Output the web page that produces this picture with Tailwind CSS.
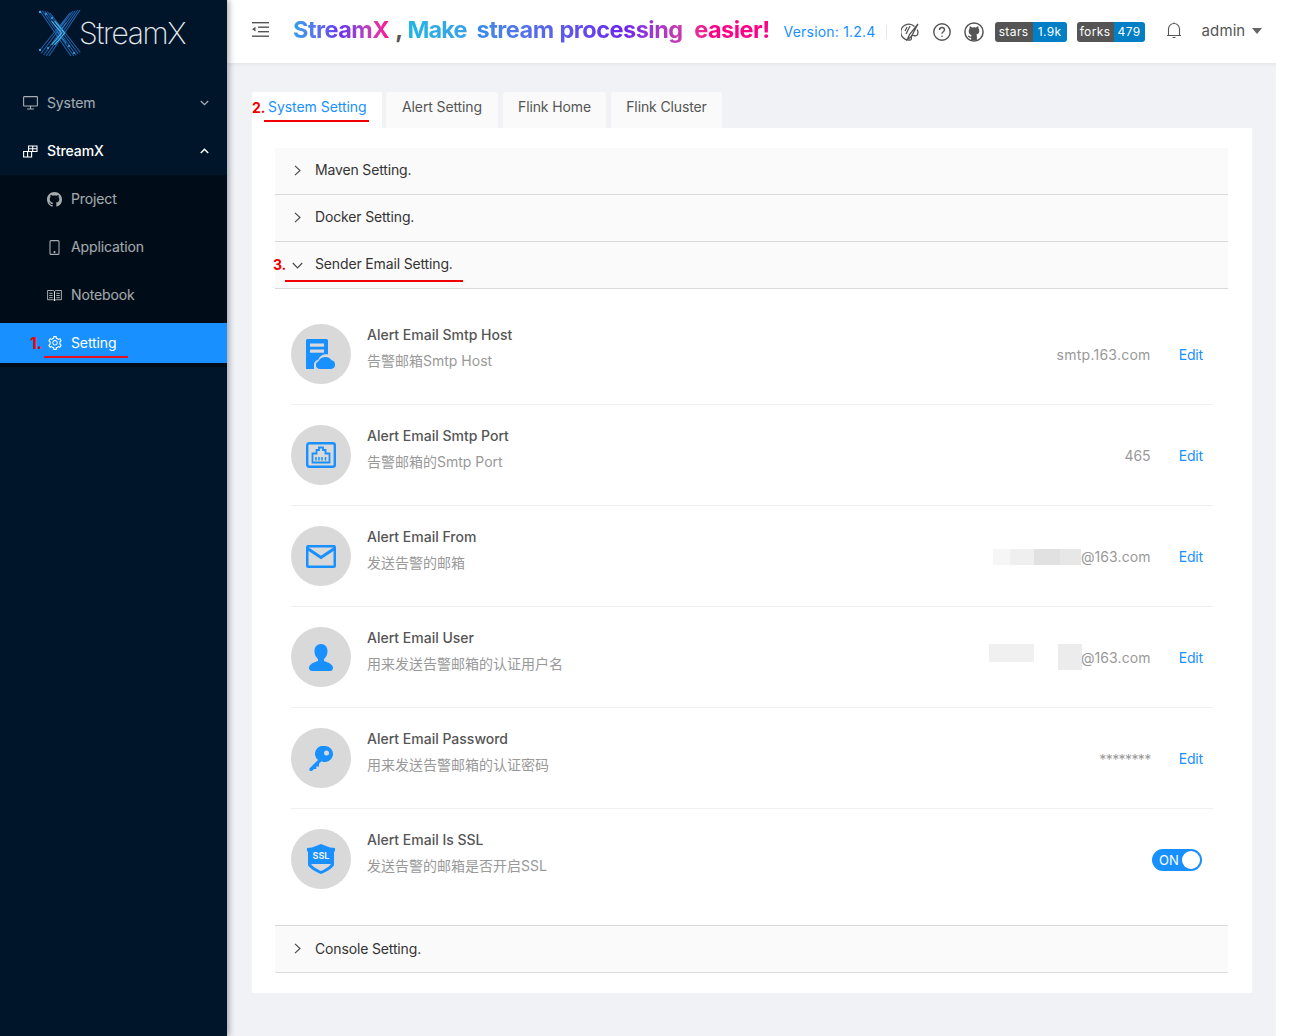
<!DOCTYPE html>
<html lang="en">
<head>
<meta charset="utf-8">
<script src="https://cdn.jsdelivr.net/npm/@tailwindcss/browser@4"></script>
<title>StreamX</title>
</head>
<body class="bg-white font-['Inter','Noto_Sans_CJK_SC',sans-serif] text-sm">
<div class="flex w-[1276px] h-[1036px] overflow-hidden bg-[#f0f2f5]">
  <!-- sidebar -->
  <aside class="relative z-10 w-[227px] shrink-0 bg-[#001529] shadow-[2px_0_6px_rgba(0,21,41,0.35)] text-[14px] tracking-[-0.12px]">
    <div class="h-[79px] flex items-start pt-[10px] pl-[39px]">
      <svg class="w-[42px] h-[46px] shrink-0" viewBox="0 0 42 46" fill="none" stroke-linecap="round">
        <g stroke="#1d62ad" stroke-width="1.100">
          <path d="M1 1L32 46M3.500 1L34.500 45.500M6 1.500L37 45M8.500 2L39 43.500M11 3L41 42M13.500 6L24 21"/>
          <path d="M41 0L10 46M38.500 .5L7.500 45.500M36 1L5 44.500M33.500 1.500L2.500 43M31 3L1 40M28.500 6L17 23"/>
        </g>
        <path d="M13 11.500L22.500 23 13 34.500M16 11.500L25.500 23 16 34.500" stroke="#56c2ee" stroke-width="1.100"/>
        <path d="M27 13L19.500 23 27 33" stroke="#2f86cf" stroke-width="1"/>
        <g fill="#3fa9e8"><circle cx="1" cy="2" r="1.200"/><circle cx="7" cy="4" r="1"/><circle cx="13" cy="8" r="1"/><circle cx="1" cy="40" r="1.200"/><circle cx="9" cy="38" r="1"/><circle cx="35" cy="43" r="1"/><circle cx="30" cy="36" r="1"/></g>
      </svg>
      <span class="ml-[-2px] mt-[5px] font-extralight text-[30px] leading-[36px] tracking-[-1.350px] text-[#e4e9ee]">StreamX</span>
    </div>

    <div class="mt-[4px] h-[40px] flex items-center pl-[23px] pr-[18px] text-white/65">
      <svg class="w-[15px] h-[14px] mr-[9px]" viewBox="0 0 15 14" fill="none" stroke="currentColor" stroke-width="1.100"><rect x=".6" y=".6" width="13.800" height="9.400" rx=".6"/><path d="M7.500 10v3M4 13h7"/></svg>
      <span class="flex-1">System</span>
      <svg class="w-[9px] h-[6px]" viewBox="0 0 9 6" fill="none" stroke="currentColor" stroke-width="1.300"><path d="M.8 1l3.700 3.700L8.200 1"/></svg>
    </div>
    <div class="mt-[8px] h-[40px] flex items-center pl-[23px] pr-[18px] text-white font-medium">
      <svg class="w-[15px] h-[13px] mr-[9px]" viewBox="0 0 15 13" fill="none" stroke="currentColor" stroke-width="1.100"><path d="M5.500 1h8.500v5.500H5.500zM9.700 1v5.500M5.500 3.800h8.500M.6 6.500h8v5.500h-8zM4.600 6.500v5.500"/></svg>
      <span class="flex-1">StreamX</span>
      <svg class="w-[9px] h-[6px]" viewBox="0 0 9 6" fill="none" stroke="currentColor" stroke-width="1.500"><path d="M.8 5l3.700-3.700L8.200 5"/></svg>
    </div>

    <div class="mt-[4px] bg-[#000c17] pt-[4px] pb-[4px] text-white/65">
      <div class="h-[40px] flex items-center pl-[47px]">
        <svg class="w-[15px] h-[15px] mr-[9px]" viewBox="0 0 16 16" fill="currentColor"><path d="M8 0C3.580 0 0 3.580 0 8c0 3.540 2.290 6.530 5.470 7.590.4.070.55-.17.55-.38 0-.19-.01-.82-.01-1.490-2.010.370-2.530-.49-2.690-.94-.09-.23-.48-.94-.82-1.130-.28-.15-.68-.52-.01-.53.630-.01 1.080.580 1.230.820.720 1.210 1.870.870 2.330.660.070-.52.280-.87.510-1.070-1.780-.2-3.640-.89-3.640-3.950 0-.87.310-1.590.820-2.150-.08-.2-.36-1.020.080-2.120 0 0 .670-.21 2.200.820.640-.18 1.320-.27 2-.27s1.360.090 2 .27c1.530-1.040 2.200-.82 2.200-.82.440 1.100.160 1.920.080 2.120.510.560.820 1.270.820 2.150 0 3.070-1.870 3.750-3.650 3.950.290.250.540.730.540 1.480 0 1.070-.01 1.930-.01 2.200 0 .21.150.46.550.38A8.013 8.013 0 0016 8c0-4.420-3.580-8-8-8z"/></svg>
        <span>Project</span>
      </div>
      <div class="mt-[8px] h-[40px] flex items-center pl-[47px]">
        <svg class="w-[15px] h-[15px] mr-[9px]" viewBox="0 0 15 15" fill="none" stroke="currentColor" stroke-width="1.100"><rect x="3" y=".6" width="9" height="13.800" rx="1"/><circle cx="7.500" cy="12" r=".5" fill="currentColor"/></svg>
        <span>Application</span>
      </div>
      <div class="mt-[8px] h-[40px] flex items-center pl-[47px]">
        <svg class="w-[15px] h-[13px] mr-[9px]" viewBox="0 0 15 13" fill="none" stroke="currentColor" stroke-width="1"><path d="M.6 1.500h5c1 0 1.900.5 1.900 1.500v9c0-.9-.9-1.300-1.900-1.300h-5zM14.400 1.500h-5c-1 0-1.900.5-1.900 1.500v9c0-.9.9-1.300 1.900-1.300h5zM2.200 4.300h3.500M2.200 6.500h3.500M2.200 8.700h3.500M9.300 4.300h3.500M9.300 6.500h3.500M9.300 8.700h3.500"/></svg>
        <span>Notebook</span>
      </div>
      <div class="relative mt-[8px] h-[40px] flex items-center pl-[47px] bg-[#1890ff] text-white">
        <span class="absolute left-[30px] top-[10px] text-[16px] leading-[20px] font-bold text-[#f00000]">1.</span>
        <svg class="w-[16px] h-[16px] mr-[8px]" viewBox="0 0 1024 1024" fill="currentColor"><path d="M924.800 625.700l-65.500-56c3.100-19 4.700-38.400 4.700-57.800s-1.600-38.800-4.700-57.800l65.500-56a32.030 32.030 0 0 0 9.300-35.200l-.9-2.600a443.740 443.740 0 0 0-79.700-137.900l-1.800-2.100a32.120 32.120 0 0 0-35.100-9.500l-81.300 28.900c-30-24.600-63.500-44-99.700-57.600l-15.700-85a32.050 32.050 0 0 0-25.800-25.700l-2.700-.5c-52.100-9.400-106.900-9.400-159 0l-2.700.5a32.050 32.050 0 0 0-25.800 25.700l-15.800 85.400a351.860 351.860 0 0 0-99 57.400l-81.900-29.100a32 32 0 0 0-35.100 9.500l-1.800 2.100a446.020 446.020 0 0 0-79.700 137.900l-.9 2.600c-4.500 12.500-.8 26.500 9.300 35.200l66.300 56.600c-3.100 18.800-4.600 38-4.600 57.100 0 19.200 1.500 38.400 4.600 57.100L99 625.500a32.030 32.030 0 0 0-9.300 35.200l.9 2.600c18.100 50.400 44.900 96.900 79.700 137.900l1.800 2.100a32.120 32.120 0 0 0 35.100 9.500l81.900-29.100c29.800 24.500 63.100 43.900 99 57.400l15.800 85.400a32.050 32.050 0 0 0 25.800 25.700l2.700.5a449.400 449.400 0 0 0 159 0l2.700-.5a32.050 32.050 0 0 0 25.800-25.700l15.700-85a350 350 0 0 0 99.700-57.600l81.300 28.900a32 32 0 0 0 35.100-9.500l1.800-2.100c34.800-41.100 61.600-87.500 79.700-137.900l.9-2.600c4.500-12.300.8-26.300-9.300-35zM788.300 465.900c2.500 15.100 3.800 30.600 3.800 46.100s-1.300 31-3.800 46.100l-6.600 40.100 74.700 63.900a370.030 370.030 0 0 1-42.600 73.600L721 702.800l-31.400 25.800c-23.900 19.600-50.500 35-79.300 45.800l-38.100 14.300-17.900 97a377.500 377.500 0 0 1-85 0l-17.900-97.200-37.800-14.500c-28.500-10.800-55-26.200-78.700-45.700l-31.400-25.900-93.400 33.200c-17-22.900-31.200-47.600-42.600-73.600l75.500-64.500-6.500-40c-2.400-14.900-3.700-30.300-3.700-45.500 0-15.300 1.200-30.600 3.700-45.500l6.500-40-75.500-64.500c11.300-26.100 25.600-50.700 42.600-73.600l93.400 33.200 31.400-25.900c23.700-19.500 50.200-34.900 78.700-45.700l37.900-14.300 17.900-97.200c28.100-3.200 56.800-3.200 85 0l17.900 97 38.100 14.300c28.700 10.800 55.400 26.200 79.300 45.800l31.400 25.800 92.800-32.900c17 22.900 31.200 47.600 42.600 73.600L781.800 426l6.500 39.900zM512 326c-97.200 0-176 78.800-176 176s78.800 176 176 176 176-78.800 176-176-78.800-176-176-176zm79.200 255.200A111.600 111.600 0 0 1 512 614c-29.900 0-58-11.700-79.200-32.800A111.600 111.600 0 0 1 400 502c0-29.900 11.700-58 32.800-79.200C454 401.600 482.100 390 512 390c29.900 0 58 11.600 79.200 32.800A111.600 111.600 0 0 1 624 502c0 29.900-11.700 58-32.800 79.200z"/></svg>
        <span>Setting</span>
        <span class="absolute left-[44px] top-[33px] w-[84px] h-[2px] bg-[#e8101c]"></span>
      </div>
    </div>
  </aside>

  <!-- main -->
  <div class="flex-1 min-w-0 flex flex-col">
    <header class="relative z-[5] h-[63px] shrink-0 bg-white shadow-[0_1px_4px_rgba(0,21,41,0.08)] flex items-center pl-[25px] text-[#555] whitespace-nowrap">
      <svg class="shrink-0 w-[17px] h-[15px] mb-[5px]" viewBox="0 0 17 15" fill="#555"><rect x="0" y="0" width="17" height="1.400"/><rect x="6" y="4.500" width="11" height="1.400"/><rect x="6" y="9" width="11" height="1.400"/><rect x="0" y="13.500" width="17" height="1.400"/><path d="M0 7.200L3.500 4.800V9.600z"/></svg>
      <div class="shrink-0 ml-[24px] mb-[4px] flex items-baseline font-bold text-[23.5px] leading-[32px] tracking-[-0.5px]">
        <span class="bg-linear-to-r from-[#2fa0ea] via-[#6a30f0] to-[#ff0090] bg-clip-text text-transparent">StreamX</span>
        <span class="ml-[6px] text-[#555]">,</span>
        <span class="ml-[5px] tracking-[-0.9px] bg-linear-to-r from-[#1fb5e4] to-[#3aa0e8] bg-clip-text text-transparent">Make</span>
        <span class="ml-[10px] [word-spacing:0.7px] bg-linear-to-r from-[#3a8ce8] via-[#6a20ee] via-50% to-[#ff0088] to-80% bg-clip-text text-transparent">stream processing&nbsp; easier!</span>
      </div>
      <span class="shrink-0 ml-[14px] w-[89px] text-[14px] tracking-[0.2px] text-[#1890ff]">Version: 1.2.4</span>
      <span class="shrink-0 ml-[13px] w-px h-[14px] bg-[#e8e8e8]"></span>
      <svg class="shrink-0 ml-[14px] w-[18px] h-[18px]" viewBox="0 0 18 18" fill="none" stroke="#555" stroke-width="1.300"><path d="M13.500 3.500A8 8 0 1 0 9 17c1.500 0 1.500-1.500 1.200-2.500C10 13 11 12 12.500 12.500c2 .5 4.500.5 4.500-3 0-1-.3-2-.8-3"/><path d="M17 1L8.500 11.500l-2.200 5 4-3L17 1zM6 4L4 8M9 3L5 11"/></svg>
      <svg class="shrink-0 ml-[14px] w-[18px] h-[18px]" viewBox="0 0 18 18" fill="none" stroke="#555" stroke-width="1.400"><circle cx="9" cy="9" r="8.200"/><path d="M6.500 7c0-1.500 1.100-2.500 2.500-2.500s2.500 1 2.500 2.300c0 2-2.500 2-2.500 4"/><circle cx="9" cy="13.200" r=".8" fill="#555" stroke="none"/></svg>
      <svg class="shrink-0 ml-[13px] w-[20px] h-[20px]" viewBox="0 0 20 20"><circle cx="10" cy="10" r="9.100" fill="none" stroke="#555" stroke-width="1.500"/><path fill="#555" d="M5.800 4l2.300 1.500a7 7 0 0 1 3.800 0L14.200 4l.4 2.500a4 4 0 0 1 .7 2.500c0 2.200-1.300 3.200-3.100 3.500.5.400.7 1 .7 1.700V18h-5.800v-2.300c-1.700.2-2.800-.3-3.400-1.700l1.300-.4c.4.800 1 1 2.100.9 0-.7.2-1.200.7-1.500-1.800-.3-3.100-1.300-3.100-3.500a4 4 0 0 1 .7-2.500z"/></svg>
      <div class="shrink-0 ml-[11px] flex h-[20px] rounded-[3px] overflow-hidden text-[12px] leading-[20px] text-white tracking-[0.4px]">
        <span class="w-[38px] bg-[#555] text-center">stars</span><span class="w-[34px] bg-[#007ec6] text-center">1.9k</span>
      </div>
      <div class="shrink-0 ml-[10px] flex h-[20px] rounded-[3px] overflow-hidden text-[12px] leading-[20px] text-white tracking-[0.4px]">
        <span class="w-[37px] bg-[#555] text-center">forks</span><span class="w-[31px] bg-[#007ec6] text-center">479</span>
      </div>
      <svg class="shrink-0 ml-[22px] mb-[2px] w-[14px] h-[17px]" viewBox="0 0 14 17" fill="none" stroke="#555" stroke-width="1.100"><path d="M1.500 13.500V7a5.500 5.500 0 0 1 11 0v6.500M0 13.500h14M5.500 15.500h3M7 .5v1"/></svg>
      <span class="shrink-0 ml-[21px] mb-[1px] text-[15px] tracking-[0.1px] text-[#555]">admin</span>
      <span class="shrink-0 ml-[7px] mb-[1px] w-0 h-0 border-x-[5.500px] border-x-transparent border-t-[6px] border-t-[#666]"></span>
    </header>

    <main class="flex-1 min-h-0 pt-[25px] pl-[25px] pr-[24px]">
      <!-- tabs -->
      <div class="flex items-end h-[40px] text-[14px] text-[#555] tracking-[-0.12px]">
        <div class="relative w-[130px] h-[36px] flex items-center pl-[16px] pb-[6px] bg-white rounded-t-[2px] text-[#1890ff] tracking-[-0.05px]">
          <span class="absolute left-0 top-[6px] text-[14px] leading-[20px] font-bold text-[#f00000]">2.</span>
          <span>System Setting</span>
          <span class="absolute left-[12px] top-[28px] w-[105px] h-[2px] bg-[#f00000]"></span>
        </div>
        <div class="ml-[4px] w-[112px] h-[36px] flex items-center justify-center pb-[6px] bg-[#fafafa] rounded-t-[2px]">Alert Setting</div>
        <div class="ml-[5px] w-[103px] h-[36px] flex items-center justify-center pb-[6px] bg-[#fafafa] rounded-t-[2px]">Flink Home</div>
        <div class="ml-[5px] w-[111px] h-[36px] flex items-center justify-center pb-[6px] bg-[#fafafa] rounded-t-[2px]">Flink Cluster</div>
      </div>

      <!-- card -->
      <section class="bg-white h-[865px] pl-[23px] pr-[24px] pt-[20px] rounded-b-[2px]">
        <div class="h-[47px] flex items-center bg-[#fafafa] border-b border-[#d9d9d9] pl-[18px] text-[#333] tracking-[-0.15px]">
          <svg class="w-[9px] h-[11px] mr-[13px] mb-[1px]" viewBox="0 0 9 11" fill="none" stroke="#444" stroke-width="1.100"><path d="M2 .8L7 5.500 2 10.200"/></svg>
          <span class="pb-[2px]">Maven Setting.</span>
        </div>
        <div class="h-[47px] flex items-center bg-[#fafafa] border-b border-[#d9d9d9] pl-[18px] text-[#333] tracking-[-0.15px]">
          <svg class="w-[9px] h-[11px] mr-[13px] mb-[1px]" viewBox="0 0 9 11" fill="none" stroke="#444" stroke-width="1.100"><path d="M2 .8L7 5.500 2 10.200"/></svg>
          <span class="pb-[2px]">Docker Setting.</span>
        </div>
        <div class="relative h-[47px] flex items-center bg-[#fafafa] border-b border-[#d9d9d9] pl-[17px] text-[#333] tracking-[-0.15px]">
          <span class="absolute left-[-2px] top-[13px] text-[14px] leading-[20px] font-bold text-[#f00000]">3.</span>
          <svg class="w-[11px] h-[7px] mr-[12px]" viewBox="0 0 11 7" fill="none" stroke="#444" stroke-width="1.100"><path d="M.8 1l4.700 5 4.700-5"/></svg>
          <span class="pb-[2px]">Sender Email Setting.</span>
          <span class="absolute left-[10px] top-[38px] w-[178px] h-[2px] bg-[#f00000]"></span>
        </div>

        <!-- list -->
        <div class="h-[636px] pt-[15px] pl-[16px] pr-[15px]">
          <div class="h-[101px] flex items-start pt-[20px] border-b border-[#f0f0f0]">
            <div class="w-[60px] h-[60px] rounded-full bg-[#d9d9d9] flex items-center justify-center">
              <svg class="w-[30px] h-[30px]" viewBox="0 0 30 30"><path fill="#1890ff" d="M1.500 0h19A1.500 1.500 0 0 1 22 1.500V30H0V1.500A1.500 1.500 0 0 1 1.500 0z"/><rect x="4" y="4.500" width="14" height="3.200" fill="#d9d9d9"/><rect x="4" y="10.500" width="14" height="3.200" fill="#d9d9d9"/><path fill="#d9d9d9" d="M8 30v-4a5 5 0 0 1 4-5 9 9 0 0 1 15-3v12z"/><path fill="#1890ff" d="M13.500 30a4 4 0 0 1-1-7.700A7.500 7.500 0 0 1 25.500 21.200a4.500 4.500 0 0 1 0 8.800z"/></svg>
            </div>
            <div class="ml-[16px] flex-1">
              <div class="leading-[22px] font-medium text-[#555]">Alert Email Smtp Host</div>
              <div class="mt-[4px] leading-[22px] text-[#999]">告警邮箱Smtp Host</div>
            </div>
            <span class="mt-[20px] leading-[22px] text-[#999] tracking-[0.25px]">smtp.163.com</span>
            <span class="ml-[28px] mr-[10px] mt-[20px] leading-[22px] text-[#1890ff] tracking-[-0.15px]">Edit</span>
          </div>

          <div class="h-[101px] flex items-start pt-[20px] border-b border-[#f0f0f0]">
            <div class="w-[60px] h-[60px] rounded-full bg-[#d9d9d9] flex items-center justify-center">
              <svg class="w-[30px] h-[26px]" viewBox="0 0 30 26" fill="none" stroke="#1890ff"><rect x="1.200" y="1.200" width="27.600" height="23.600" rx="2" stroke-width="2.400"/><path d="M6.500 20.500V11.500h4V8h2.500V5.500h4V8h2.500v3.500h4v9z" stroke-width="1.800"/><path d="M10 15v3.500M13 15v3.500M16 15v3.500M19.500 15v3.500" stroke-width="1.500"/></svg>
            </div>
            <div class="ml-[16px] flex-1">
              <div class="leading-[22px] font-medium text-[#555]">Alert Email Smtp Port</div>
              <div class="mt-[4px] leading-[22px] text-[#999]">告警邮箱的Smtp Port</div>
            </div>
            <span class="mt-[20px] leading-[22px] text-[#999]">465</span>
            <span class="ml-[28px] mr-[10px] mt-[20px] leading-[22px] text-[#1890ff] tracking-[-0.15px]">Edit</span>
          </div>

          <div class="h-[101px] flex items-start pt-[20px] border-b border-[#f0f0f0]">
            <div class="w-[60px] h-[60px] rounded-full bg-[#d9d9d9] flex items-center justify-center">
              <svg class="w-[30px] h-[23px]" viewBox="0 0 30 23" fill="none" stroke="#1890ff"><rect x="1.250" y="1.250" width="27.500" height="20.500" rx="1" stroke-width="2.500"/><path d="M1.500 3.500L15 12.500 28.500 3.500" stroke-width="3"/></svg>
            </div>
            <div class="ml-[16px] flex-1">
              <div class="leading-[22px] font-medium text-[#555]">Alert Email From</div>
              <div class="mt-[4px] leading-[22px] text-[#999]">发送告警的邮箱</div>
            </div>
            <span class="relative mt-[20px] leading-[22px] text-[#999] tracking-[0.1px]">
              <span class="absolute left-[-88px] top-[3px] flex h-[16px]"><i class="block w-[17px] bg-[#f6f6f6]"></i><i class="block w-[24px] bg-[#efefef]"></i><i class="block w-[26px] bg-[#e1e1e1]"></i><i class="block w-[21px] bg-[#e7e7e7]"></i></span>
              @163.com
            </span>
            <span class="ml-[28px] mr-[10px] mt-[20px] leading-[22px] text-[#1890ff] tracking-[-0.15px]">Edit</span>
          </div>

          <div class="h-[101px] flex items-start pt-[20px] border-b border-[#f0f0f0]">
            <div class="w-[60px] h-[60px] rounded-full bg-[#d9d9d9] flex items-center justify-center">
              <svg class="w-[24px] h-[27px]" viewBox="0 0 24 27" fill="#1890ff"><path d="M12 0c4 0 6.500 3 6.500 7 0 3-1 6-3.500 8v2c4 1.500 9 3 9 7 0 2-1.500 3-3 3H3c-1.500 0-3-1-3-3 0-4 5-5.500 9-7v-2C6.500 13 5.500 10 5.500 7c0-4 2.500-7 6.500-7z"/></svg>
            </div>
            <div class="ml-[16px] flex-1">
              <div class="leading-[22px] font-medium text-[#555]">Alert Email User</div>
              <div class="mt-[4px] leading-[22px] text-[#999]">用来发送告警邮箱的认证用户名</div>
            </div>
            <span class="relative mt-[20px] leading-[22px] text-[#999] tracking-[0.1px]">
              <span class="absolute left-[-92px] top-[-3px] w-[45px] h-[18px] bg-[#f0f0f0]"></span>
              <span class="absolute left-[-23px] top-[-3px] w-[24px] h-[26px] bg-[#ececec]"></span>
              @163.com
            </span>
            <span class="ml-[28px] mr-[10px] mt-[20px] leading-[22px] text-[#1890ff] tracking-[-0.15px]">Edit</span>
          </div>

          <div class="h-[101px] flex items-start pt-[20px] border-b border-[#f0f0f0]">
            <div class="w-[60px] h-[60px] rounded-full bg-[#d9d9d9] flex items-center justify-center">
              <svg class="w-[24px] h-[25px]" viewBox="0 0 24 25"><path fill="#1890ff" d="M16 0a8 8 0 1 1-3.500 15.200L10 17.700 10 20.500H7.300L7.300 23 5 23l-1.500 1.500c-1 1-2.500 1-3-.2-.5-1 0-1.800.7-2.500L9 14A8 8 0 0 1 16 0z"/><circle cx="17.500" cy="7" r="2.500" fill="#d9d9d9"/></svg>
            </div>
            <div class="ml-[16px] flex-1">
              <div class="leading-[22px] font-medium text-[#555]">Alert Email Password</div>
              <div class="mt-[4px] leading-[22px] text-[#999]">用来发送告警邮箱的认证密码</div>
            </div>
            <span class="mt-[21px] leading-[22px] text-[#999] tracking-[-0.6px]">********</span>
            <span class="ml-[28px] mr-[10px] mt-[20px] leading-[22px] text-[#1890ff] tracking-[-0.15px]">Edit</span>
          </div>

          <div class="h-[101px] flex items-start pt-[20px]">
            <div class="w-[60px] h-[60px] rounded-full bg-[#d9d9d9] flex items-center justify-center">
              <svg class="w-[28px] h-[30px]" viewBox="0 0 28 30"><path fill="#1890ff" d="M14 0l9 3.500L28 4v3l-1 1v13c-2 4-8 7-13 9-5-2-11-5-13-9V8L0 7V4l5-.5z"/><path fill="#d9d9d9" d="M4 20c2 3 7 5.500 10 7 3-1.500 8-4 10-7z"/><text x="14" y="15" text-anchor="middle" fill="#e8eef5" font-size="9" font-weight="700" font-family="Inter,sans-serif">SSL</text></svg>
            </div>
            <div class="ml-[16px] flex-1">
              <div class="leading-[22px] font-medium text-[#555]">Alert Email Is SSL</div>
              <div class="mt-[4px] leading-[22px] text-[#999]">发送告警的邮箱是否开启SSL</div>
            </div>
            <div class="mt-[20px] mr-[11px] w-[50px] h-[22px] rounded-full bg-[#1890ff] flex items-center justify-between pl-[7px] pr-[2px] text-white">
              <span class="text-[13px] leading-[22px]">ON</span>
              <span class="w-[18px] h-[18px] rounded-full bg-white"></span>
            </div>
          </div>
        </div>

        <div class="h-[48px] flex items-center bg-[#fafafa] border-y border-[#d9d9d9] pl-[18px] text-[#333] tracking-[-0.15px] rounded-b-[2px]">
          <svg class="w-[9px] h-[11px] mr-[13px] mb-[1px]" viewBox="0 0 9 11" fill="none" stroke="#444" stroke-width="1.100"><path d="M2 .8L7 5.500 2 10.200"/></svg>
          <span>Console Setting.</span>
        </div>
      </section>
    </main>
  </div>
</div>
</body>
</html>
